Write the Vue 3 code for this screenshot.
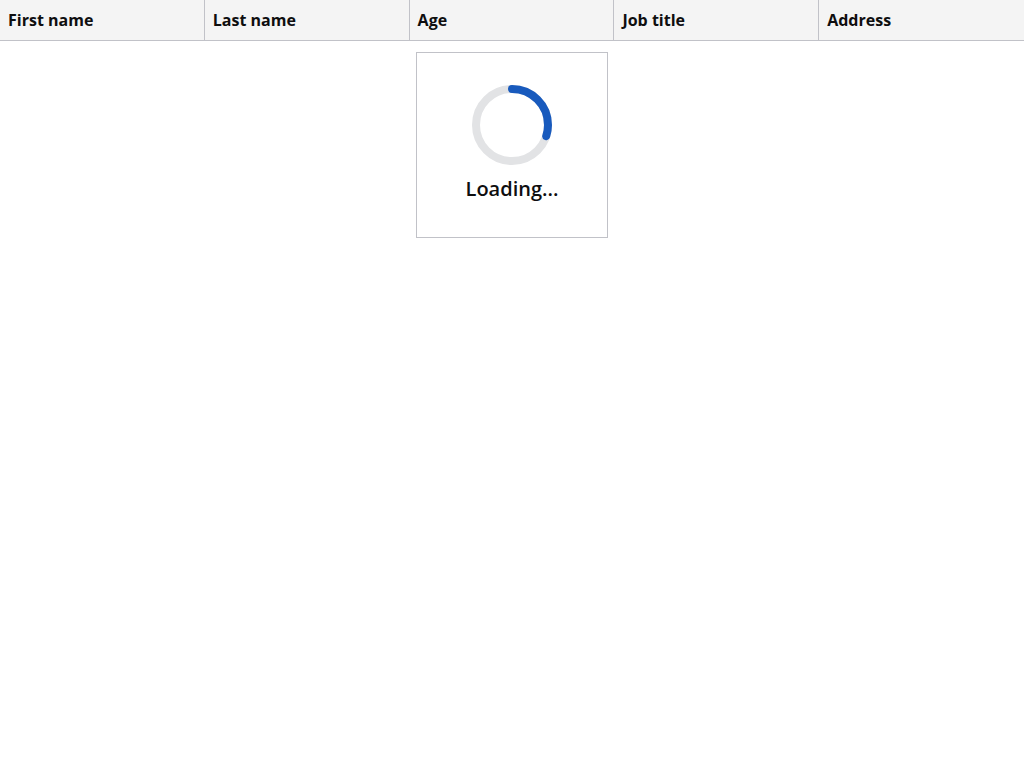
<script setup>
const columns = ['First name', 'Last name', 'Age', 'Job title', 'Address']
</script>

<template>
  <main class="page">
    <table class="grid">
      <thead>
        <tr>
          <th v-for="column in columns" :key="column" scope="col">{{ column }}</th>
        </tr>
      </thead>
    </table>
    <div class="overlay">
      <div class="loader" role="status">
        <svg class="spinner" viewBox="0 0 80 80" aria-hidden="true">
          <circle class="track" cx="40" cy="40" r="36" />
          <circle class="arc" cx="40" cy="40" r="36" pathLength="100" transform="rotate(-90 40 40)" />
        </svg>
        <p class="label">Loading...</p>
      </div>
    </div>
  </main>
</template>

<style scoped>
.page {
  font-family: "Open Sans", "Noto Sans", sans-serif;
  color: #0e0e0f;
}
.grid {
  width: 100%;
  table-layout: fixed;
  border-collapse: separate;
  border-spacing: 0;
}
th {
  box-sizing: border-box;
  height: 41px;
  padding: 8px;
  border-right: 1px solid #c1c2c8;
  border-bottom: 1px solid #c1c2c8;
  background: #f4f4f4;
  font-size: 16px;
  font-weight: 700;
  line-height: 24px;
  text-align: left;
}
th:last-child {
  border-right: 0;
}
.overlay {
  display: flex;
  justify-content: center;
  padding: 11px;
}
.loader {
  box-sizing: border-box;
  width: 192px;
  padding: 32px;
  border: 1px solid #c1c2c8;
  background: #fff;
  text-align: center;
}
.spinner {
  display: block;
  width: 80px;
  height: 80px;
  margin: 0 auto 8px;
}
.track,
.arc {
  fill: none;
  stroke-width: 8;
}
.track {
  stroke: #e2e3e5;
}
.arc {
  stroke: #185abd;
  stroke-linecap: round;
  stroke-dasharray: 30 70;
}
.label {
  margin: 0;
  font-size: 20px;
  font-weight: 600;
  line-height: 32px;
}
</style>

<style>
body {
  background: #fff;
}
</style>
